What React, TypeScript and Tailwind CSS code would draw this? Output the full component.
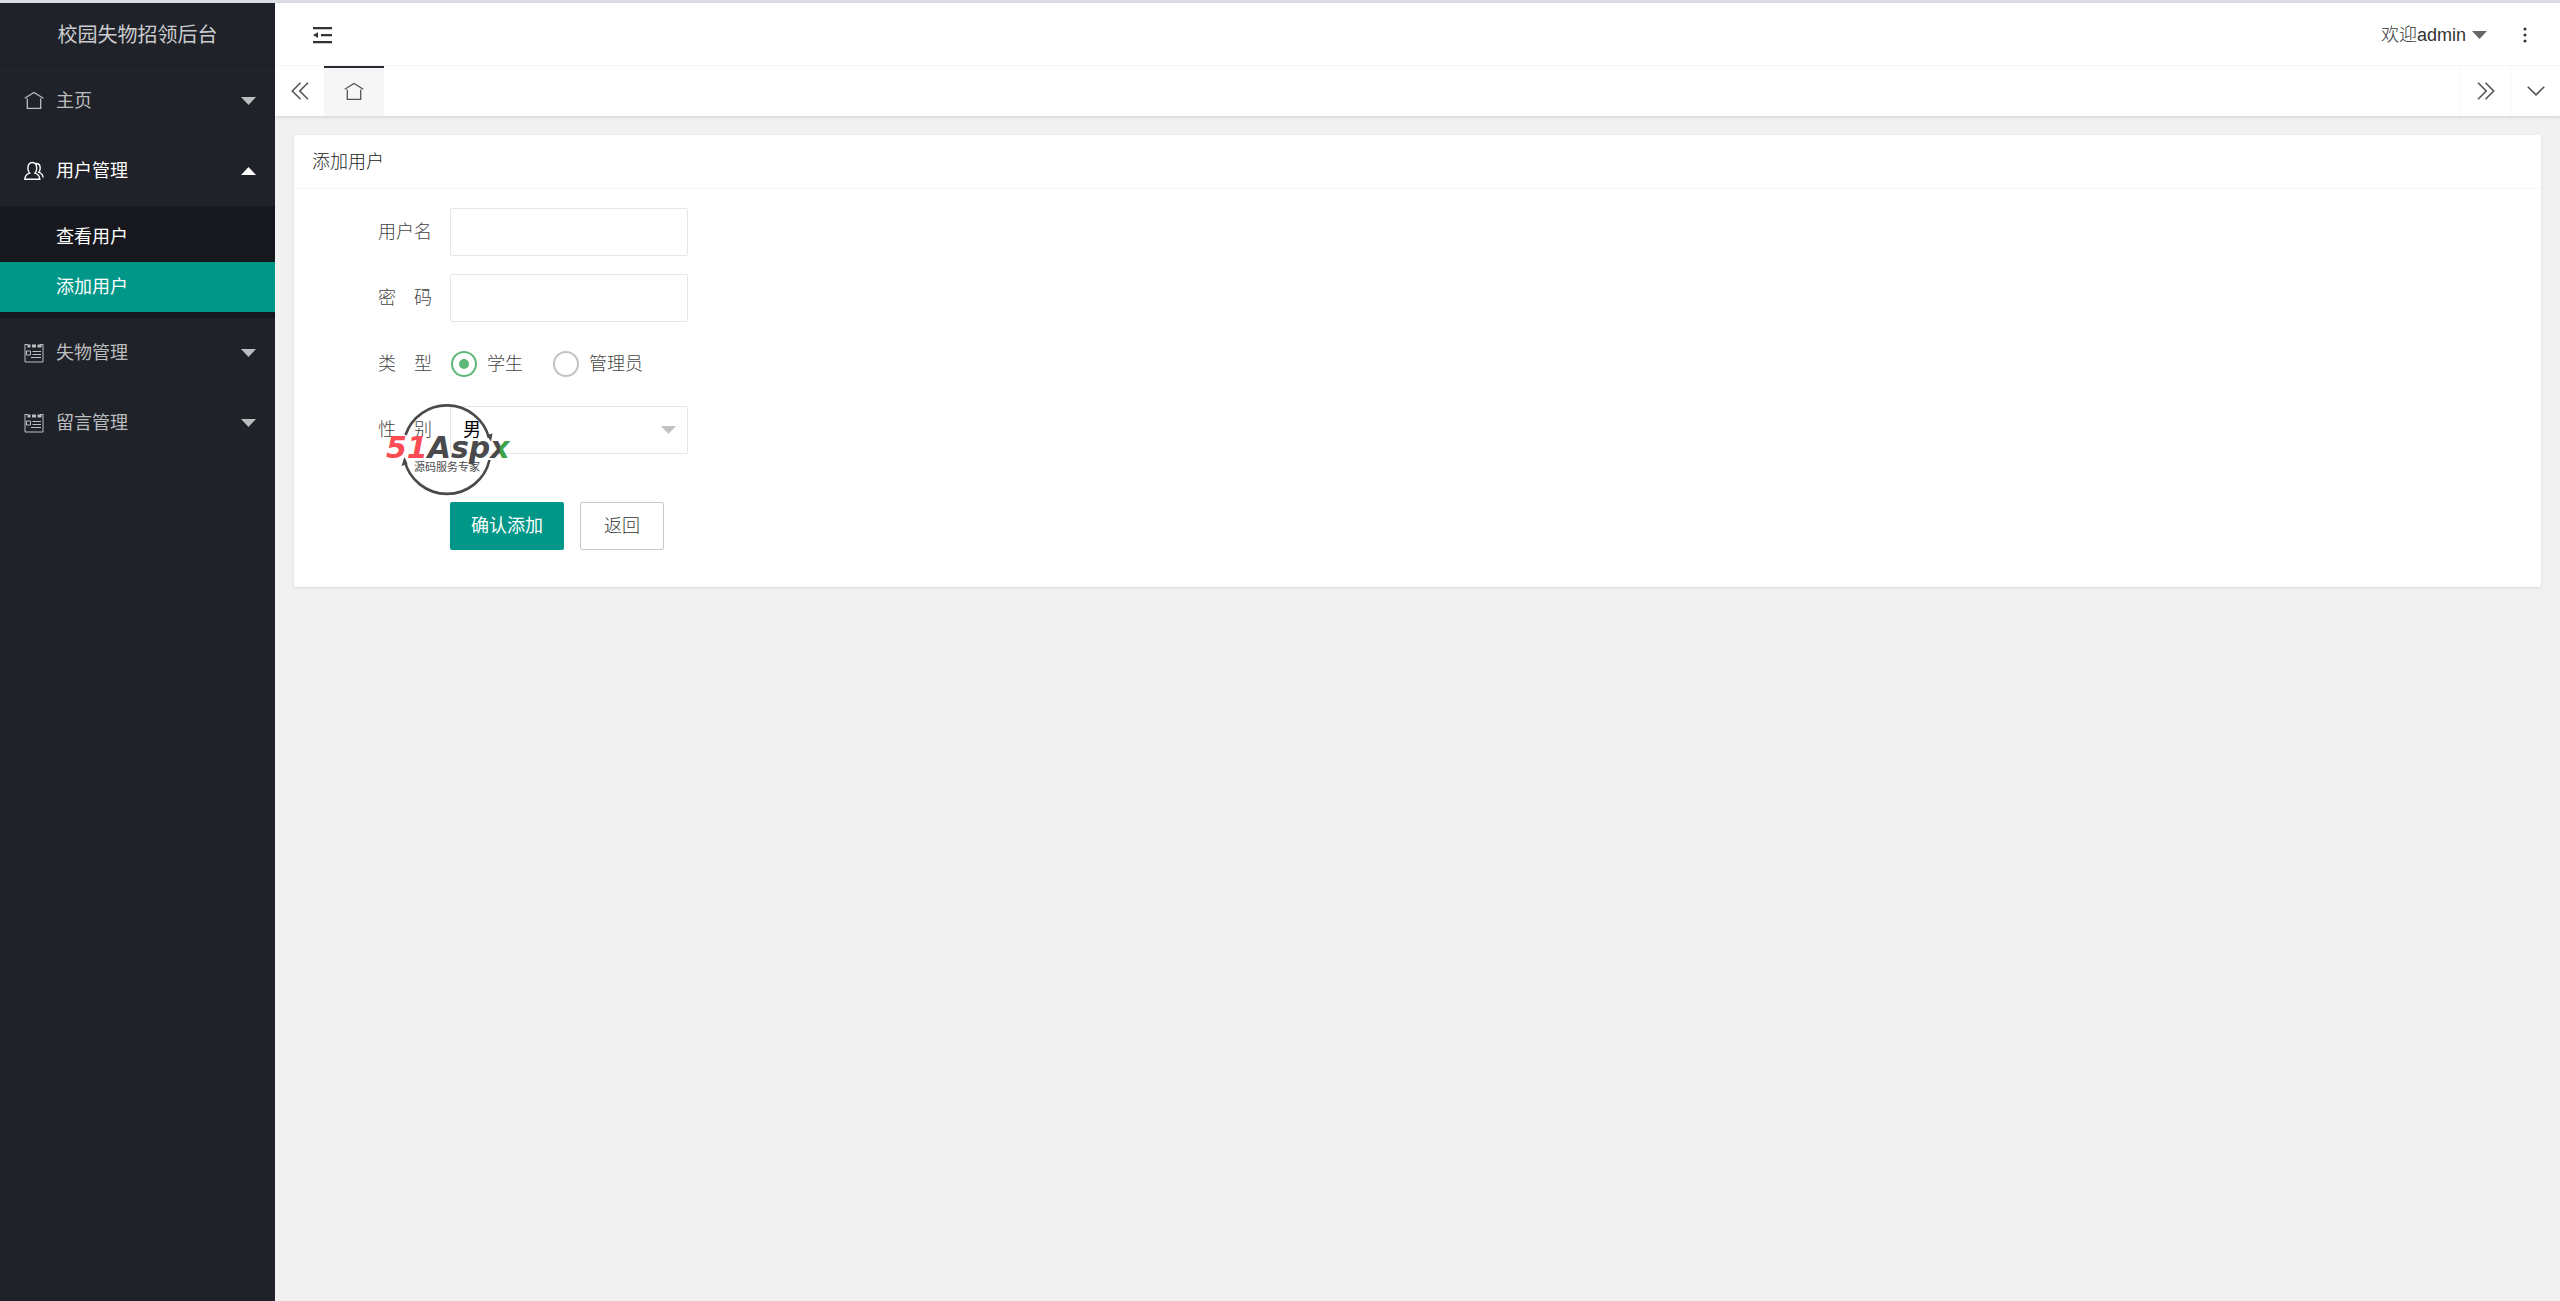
import { ReactNode, useState } from "react";

const HomeIcon = ({ className }: { className?: string }) => (
  <svg
    className={`size-5 ${className ?? ""}`}
    viewBox="0 0 20 20"
    fill="none"
    stroke="currentColor"
    strokeWidth="1.3"
  >
    <path d="M.7 7.300 10 1.500l9.300 5.800M3.300 7.500v9.800h13.400V7.500" />
  </svg>
);

const UsersIcon = () => (
  <svg
    className="size-5"
    viewBox="0 0 20 20"
    fill="none"
    stroke="currentColor"
    strokeWidth="1.4"
  >
    <path d="M.8 18.300c.2-3.400 1.600-5.200 4.800-6.200C4.300 10.800 3.900 9 3.900 7.200c0-3.600 1.600-5.700 4.400-5.700s4.400 2.100 4.400 5.700c0 1.800-.4 3.600-1.700 4.900 3.200 1 4.600 2.800 4.800 6.200z" />
    <path d="M12 2.500c2.700 0 4.200 1.800 4.200 4.600 0 1.700-.4 3-1.500 4.100 2.600.9 4 2.400 4.400 5.300" />
  </svg>
);

const FormIcon = () => (
  <svg className="size-5" viewBox="0 0 20 20" fill="none" stroke="currentColor">
    <path d="M1 1v18h18V1M1 1.500h3M16 1.500h3" />
    <path d="M3.500 3h3M8 3h4M13.500 3h4" strokeWidth="3" />
    <path d="M2.500 8h4v4h-4zM8.500 8.500h8.500M8.500 11.500h8.500M7 14.500h10" />
  </svg>
);

const CollapseIcon = () => (
  <svg className="h-[18px] w-[19px]" viewBox="0 0 19 18" fill="currentColor">
    <path d="M0 1h19v2.200H0zM8 8h11v2.200H8zM0 15h19v2.200H0zM0 9.100 5 6.300v5.600z" />
  </svg>
);

const DoubleChevron = ({ right }: { right?: boolean }) => (
  <svg
    className={`h-[18px] w-[18px] ${right ? "rotate-180" : ""}`}
    viewBox="0 0 18 18"
    fill="none"
    stroke="currentColor"
    strokeWidth="1.6"
  >
    <path d="M9.500.8 1.300 9l8.200 8.200M17 .8 8.800 9l8.200 8.200" />
  </svg>
);

const Caret = ({ up, className }: { up?: boolean; className?: string }) => (
  <svg
    className={`h-2 w-[15px] ${up ? "rotate-180" : ""} ${className ?? ""}`}
    viewBox="0 0 15 8"
    fill="currentColor"
  >
    <path d="M0 0h15L7.500 8z" />
  </svg>
);

interface NavItemProps {
  icon: ReactNode;
  label: string;
  open?: boolean;
  children?: ReactNode;
}
const NavItem = ({ icon, label, open, children }: NavItemProps) => (
  <li>
    <button
      type="button"
      aria-expanded={!!open}
      className={`flex h-[70px] w-full items-center pr-[19px] pl-6 ${
        open ? "text-white" : "text-[#bcbdbf]"
      }`}
    >
      {icon}
      <span className="ml-3">{label}</span>
      <Caret up={open} className="ml-auto" />
    </button>
    {children}
  </li>
);

const Sidebar = () => (
  <aside className="w-[275px] shrink-0 bg-[#20222a] font-normal">
    <h1 className="flex h-[63px] items-center justify-center border-b border-[#1b1d23] pt-px text-xl text-[#cbccce]">
      校园失物招领后台
    </h1>
    <ul>
      <NavItem icon={<HomeIcon />} label="主页" />
      <NavItem icon={<UsersIcon />} label="用户管理" open>
        <ul className="bg-[#17181d] py-[6px] text-white">
          <li>
            <a href="#list" className="flex h-[50px] items-center pl-14">
              查看用户
            </a>
          </li>
          <li>
            <a
              href="#add"
              className="flex h-[50px] items-center bg-[#009688] pl-14"
            >
              添加用户
            </a>
          </li>
        </ul>
      </NavItem>
      <NavItem icon={<FormIcon />} label="失物管理" />
      <NavItem icon={<FormIcon />} label="留言管理" />
    </ul>
  </aside>
);

const Header = () => (
  <header className="bg-white text-[#333] shadow-[0_1px_3px_rgba(0,0,0,0.15)]">
    <div className="flex h-[63px] items-center border-b border-[#f6f6f6] pt-px pr-[33px] pl-[38px]">
      <button type="button" aria-label="收起菜单">
        <CollapseIcon />
      </button>
      <button type="button" className="ml-auto flex items-center gap-[6px]">
        欢迎admin
        <Caret className="text-[#666]" />
      </button>
      <button type="button" aria-label="更多" className="ml-9">
        <svg className="h-4 w-1" viewBox="0 0 4 16" fill="currentColor">
          <circle cx="2" cy="2" r="1.500" />
          <circle cx="2" cy="8" r="1.500" />
          <circle cx="2" cy="14" r="1.500" />
        </svg>
      </button>
    </div>
    <div className="flex h-[50px] text-[#555]">
      <button
        type="button"
        aria-label="向左滚动"
        className="flex w-[49px] items-center justify-center"
      >
        <DoubleChevron />
      </button>
      <a
        href="#home"
        aria-label="首页"
        className="flex w-[60px] items-center justify-center border-t-2 border-[#292b34] bg-[#f6f6f6]"
      >
        <HomeIcon />
      </a>
      <button
        type="button"
        aria-label="向右滚动"
        className="ml-auto flex w-[50px] items-center justify-center border-l border-[#f6f6f6]"
      >
        <DoubleChevron right />
      </button>
      <button
        type="button"
        aria-label="标签操作"
        className="flex w-[50px] items-center justify-center border-l border-[#f6f6f6]"
      >
        <svg
          className="h-[10px] w-[18px]"
          viewBox="0 0 18 10"
          fill="none"
          stroke="currentColor"
          strokeWidth="1.6"
        >
          <path d="m.8.8 8.200 8 8.200-8" />
        </svg>
      </button>
    </div>
  </header>
);

const Logo = () => (
  <svg
    className="pointer-events-none absolute -top-1 left-[92px] h-[94px] w-[128px]"
    viewBox="0 0 128 94"
  >
    <g fill="none" stroke="#4a4a4c" strokeWidth="2.600">
      <path d="M19.500 33A43.600 43.600 0 0 1 103 36" />
      <path d="M18.500 58A43.600 43.600 0 0 0 103.500 58" />
    </g>
    <path d="m100.500 33 6-1.500-1.500 8z" fill="#4a4a4c" />
    <path d="m21.500 62-6 2 3-9z" fill="#4a4a4c" />
    <text
      x="0"
      y="56"
      className="font-['DejaVu_Sans',sans-serif] text-[30px] font-bold italic"
    >
      <tspan fill="#fb4b53">51</tspan>
      <tspan fill="#4a4a4c">Asp</tspan>
      <tspan fill="url(#logo-x)">x</tspan>
    </text>
    {/* the right arm of the x is green */}
    <defs>
      <linearGradient
        id="logo-x"
        gradientUnits="userSpaceOnUse"
        x1="104"
        x2="124"
        y1="0"
        y2="0"
      >
        <stop offset="0.5" stopColor="#4a4a4c" />
        <stop offset="0.5" stopColor="#3fa447" />
      </linearGradient>
    </defs>
    <text x="28" y="69" fill="#4a4a4c" className="text-[11px] font-normal">
      源码服务专家
    </text>
  </svg>
);

interface FieldProps {
  label: string;
  id: string;
  children: ReactNode;
}
const Field = ({ label, id, children }: FieldProps) => (
  <div className="relative flex min-h-12 items-center gap-[18px]">
    <label htmlFor={id} className="w-[138px] text-right text-[#444]">
      {label}
    </label>
    {children}
  </div>
);

interface RadioProps {
  id: string;
  label: string;
  checked: boolean;
  onSelect: () => void;
}
const Radio = ({ id, label, checked, onSelect }: RadioProps) => (
  <label className="flex items-center gap-[10px] text-[#444]">
    <input
      id={id}
      type="radio"
      name="type"
      checked={checked}
      onChange={onSelect}
      className="size-[26px] appearance-none rounded-full border-2 border-[#c2c2c2] bg-clip-content p-[6px] checked:border-[#5fb878] checked:bg-[#5fb878]"
    />
    {label}
  </label>
);

const inputClass =
  "h-12 w-[238px] rounded-xs border border-[#e6e6e6] bg-white px-3 outline-none";

export default function App() {
  const [type, setType] = useState("student");

  return (
    <div className="flex min-h-screen flex-col border-t-3 border-[#dbdee2] bg-[#f1f1f1] font-['Liberation_Sans','Noto_Sans_CJK_SC',sans-serif] text-lg leading-6 font-light">
      <div className="flex grow">
        <Sidebar />
        <div className="min-w-0 grow">
          <Header />
          <main className="p-[19px]">
            <section className="rounded-xs bg-white shadow-[0_1px_3px_rgba(0,0,0,0.1)]">
              <h2 className="flex h-[54px] items-center border-b border-[#f6f6f6] px-[18px] text-[#222]">
                添加用户
              </h2>
              <form
                className="flex flex-col gap-[18px] pt-[19px] pb-[37px]"
                onSubmit={(e) => e.preventDefault()}
              >
                <Field label="用户名" id="username">
                  <input id="username" type="text" className={inputClass} />
                </Field>
                <Field label="密　码" id="password">
                  <input id="password" type="password" className={inputClass} />
                </Field>
                <Field label="类　型" id="student">
                  <div className="flex gap-[30px] pl-px">
                    <Radio
                      id="student"
                      label="学生"
                      checked={type === "student"}
                      onSelect={() => setType("student")}
                    />
                    <Radio
                      id="manager"
                      label="管理员"
                      checked={type === "manager"}
                      onSelect={() => setType("manager")}
                    />
                  </div>
                </Field>
                <Field label="性　别" id="gender">
                  <div className="relative">
                    <select
                      id="gender"
                      className={`${inputClass} appearance-none font-normal text-black`}
                    >
                      <option>男</option>
                      <option>女</option>
                    </select>
                    <Caret className="pointer-events-none absolute top-5 right-3 text-[#c2c2c2]" />
                  </div>
                  <Logo />
                </Field>
                <div className="flex gap-4 pt-[30px] pl-[156px]">
                  <button
                    type="submit"
                    className="h-12 rounded-xs bg-[#009688] px-[21px] font-normal text-white"
                  >
                    确认添加
                  </button>
                  <button
                    type="button"
                    className="h-12 rounded-xs border border-[#c9c9c9] bg-white px-[23px] text-[#333]"
                  >
                    返回
                  </button>
                </div>
              </form>
            </section>
          </main>
        </div>
      </div>
    </div>
  );
}
